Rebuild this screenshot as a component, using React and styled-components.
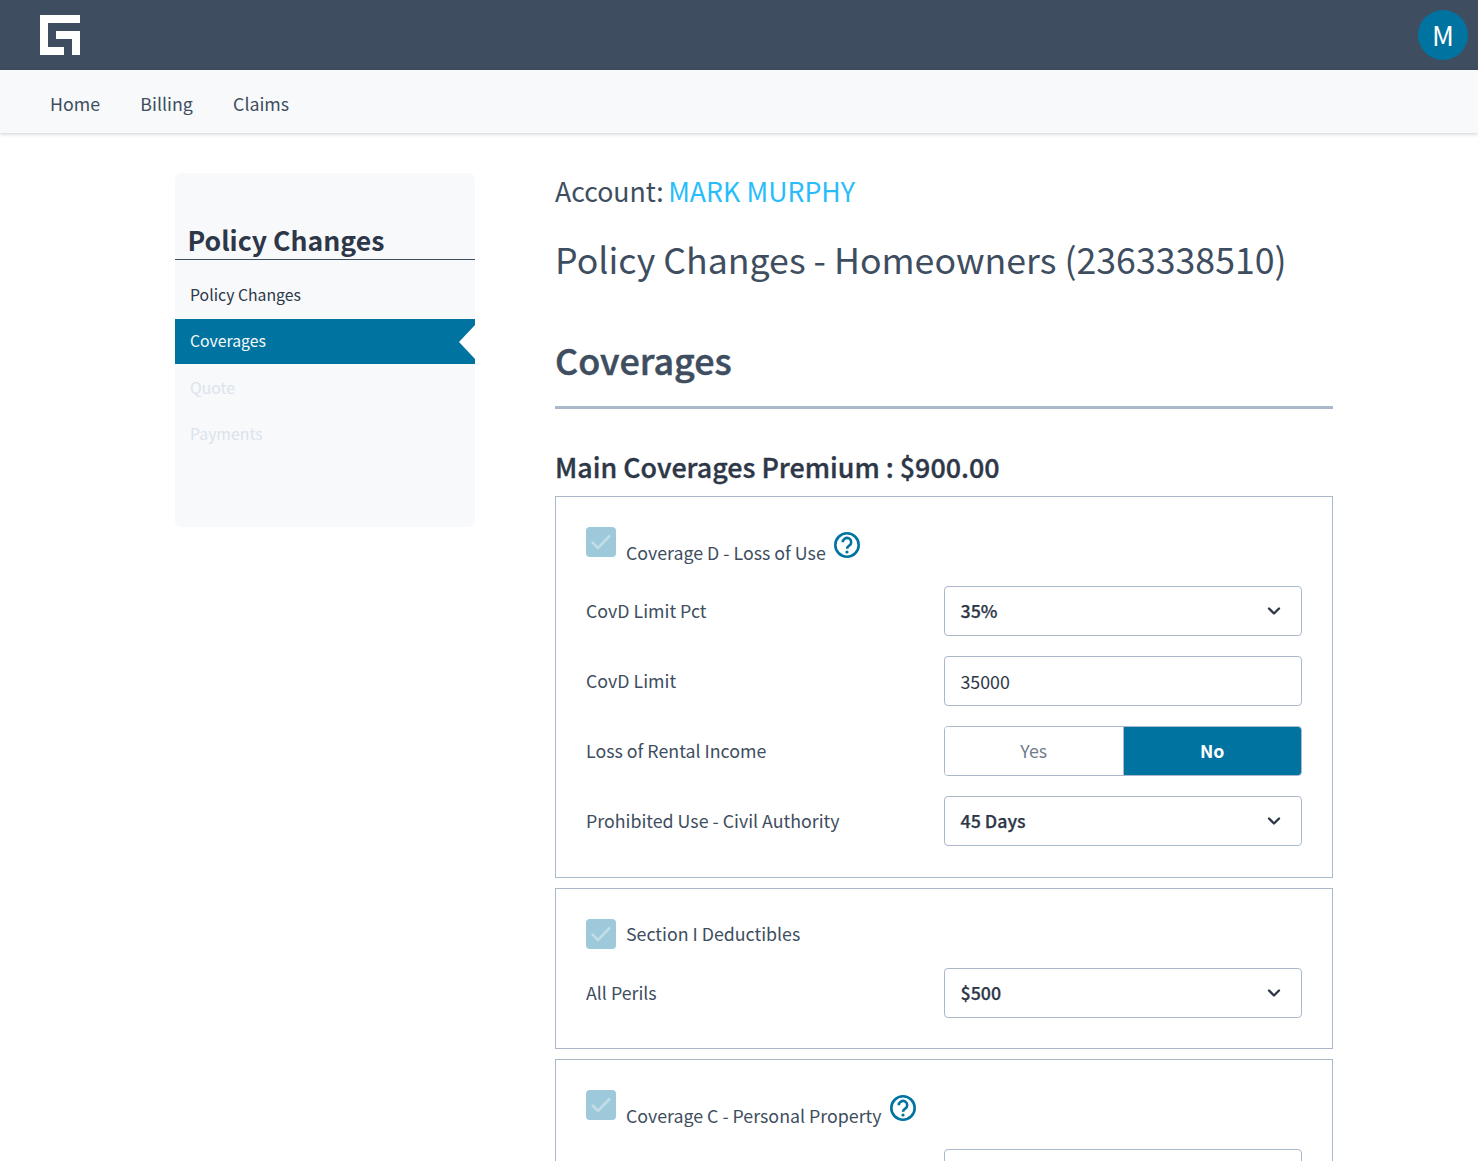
import React from "react";
import styled, { createGlobalStyle } from "styled-components";
import { ChevronDown } from "lucide-react";

const Global = createGlobalStyle`
  html, body { margin: 0; padding: 0; background: #fff; height: 100%; overflow: hidden; }
  body { font-family: "Noto Sans CJK JP", "Noto Sans CJK SC", sans-serif; color: #2d3748; }
  * { box-sizing: border-box; }
`;
const Page = styled.div`height: 1161px; overflow: hidden;`;
const TopBar = styled.header`
  height: 70px; background: #3e4e60; display: flex; align-items: center;
  justify-content: space-between; padding: 0 10px 0 40px;
`;
const Avatar = styled.div`
  width: 50px; height: 50px; border-radius: 50%; background: #0073a0; color: #fff;
  display: flex; align-items: center; justify-content: center; font-size: 27px; line-height: 1;
  padding-bottom: 1px;
`;
const Nav = styled.nav`
  height: 63px; background: #f7f9fb; display: flex; align-items: center; gap: 40.3px;
  padding: 3px 0 0 50px; box-shadow: 0 1px 4px rgba(0,0,0,.2); position: relative;
`;
const NavLink = styled.a`font-size: 17.8px; line-height: 24px; color: #3e4e60;`;
const Body = styled.div`display: flex; padding: 40px 0 0 175px; gap: 80px; align-items: flex-start;`;
const Side = styled.aside`
  width: 300px; height: 354px; flex: none; background: #f7f9fb; border-radius: 6px; padding-top: 52px;
`;
const SideTitle = styled.h2`
  margin: 0; padding: 0 12.5px; height: 35px; font-size: 26.6px; line-height: 30px; font-weight: 700;
  color: #2d3748; border-bottom: 1px solid #3e4e60;
`;
const SideList = styled.ul`list-style: none; margin: 12.5px 0 0; padding: 0;`;
const SideItem = styled.li`
  height: ${p => p.$active ? 45 : 46.5}px; display: flex; align-items: center; padding: 0 0 ${p => p.$disabled ? 1 : 2}px 15px;
  font-size: 15.8px; line-height: 24px; position: relative;
  margin-bottom: ${p => p.$active ? 1 : 0}px;
  background: ${p => p.$active ? "#0073a0" : "transparent"};
  color: ${p => p.$active ? "#f7f9fb" : p.$disabled ? "#dce3ec" : "#2d3748"};
  ${p => p.$active && `&::after {
    content: ""; position: absolute; right: 0; top: 50%; transform: translateY(-50%);
    border-top: 17px solid transparent; border-bottom: 17px solid transparent; border-right: 16px solid #fff;
  }`}
`;
const Main = styled.main`width: 778px; flex: none;`;
const Account = styled.div`
  font-size: 26.7px; line-height: 38px; color: #3e4e60; margin: -1px 0 24px; word-spacing: -1.5px;
  span { color: #28bdfa; word-spacing: 0.3px; }
`;
const Title = styled.h1`
  margin: 0; font-size: 35.7px; line-height: 50px; font-weight: 400; color: #3e4e60; white-space: nowrap;
`;
const SectionHead = styled.h2`
  margin: 50px 0 0; font-size: 35.9px; line-height: 50px; font-weight: 500; color: #3e4e60;
  -webkit-text-stroke: 0.5px #3e4e60;
  padding-bottom: 22px; border-bottom: 3px solid #a9b8cb;
`;
const Premium = styled.h3`
  margin: 40px 0 11px; font-size: 26.85px; line-height: 36px; font-weight: 500; color: #2d3748;
  -webkit-text-stroke: 0.35px #2d3748;
`;
const Card = styled.section`
  border: 1px solid #a9b8cb; padding: 30px 30px ${p => p.$compact ? 30 : 31}px; margin-bottom: 10px;
`;
const CardHead = styled.div`display: flex; align-items: flex-end; height: ${p => p.$help ? 39 : 30}px; margin-bottom: ${p => p.$help ? 20 : 19}px;`;
const Check = styled.span`
  width: 30px; height: 30px; border-radius: 4px; background: #9dc9da; display: flex; flex: none;
  align-items: center; justify-content: center; align-self: flex-start;
`;
const CardLabel = styled.span`
  font-size: 17.8px; line-height: 24px; color: #3e4e60; margin-left: 10px; white-space: nowrap;
  margin-bottom: ${p => p.$help ? 2 : 4}px;
`;
const Help = styled.svg`width: 28px; height: 28px; margin-left: 7px; align-self: flex-start; margin-top: 4px;`;
const Row = styled.div`
  display: flex; align-items: center; justify-content: space-between; height: 50px;
  & + & { margin-top: 20px; }
`;
const RowLabel = styled.label`font-size: 17.8px; line-height: 24px; color: #3e4e60; margin-bottom: 2px;`;
const Control = styled.div`
  width: 358px; height: 50px; border: 1px solid #a9b8cb; border-radius: 4px; background: #fff;
  display: flex; align-items: center; justify-content: space-between;
  padding: 0 17px ${p => p.$bold ? 2 : 0}px 15.5px; font-size: 17.8px; line-height: 24px; color: #2d3748;
  font-weight: ${p => p.$bold ? 500 : 400};
  ${p => p.$bold && "-webkit-text-stroke: 0.25px #2d3748;"}
`;
const Toggle = styled.div`
  width: 358px; height: 50px; border: 1px solid #a9b8cb; border-radius: 4px; overflow: hidden; display: flex;
`;
const ToggleOption = styled.div`
  flex: 1; display: flex; align-items: center; justify-content: center; font-size: 17.8px; line-height: 24px;
  padding-bottom: 2px;
  background: ${p => p.$on ? "#0073a0" : "#fff"};
  color: ${p => p.$on ? "#fff" : "#6e7c8c"};
  font-weight: ${p => p.$on ? 700 : 400};
  ${p => p.$on && "border-left: 1px solid #a9b8cb;"}
`;
const Arrow = styled(ChevronDown)`flex: none; position: relative; top: 1px; -webkit-text-stroke: 0;`;
const Logo = () => (
  <svg width="40" height="40" viewBox="40 15 40 40" fill="#fff" aria-label="logo">
    <path d="M40 15H80V23H48V47H64V55H40Z" />
    <path d="M56 31H80V55H72V39H56Z" />
  </svg>
);
const HelpIcon = () => (
  <Help viewBox="0 0 28 28" fill="none">
    <circle cx="14" cy="14" r="11.7" stroke="#0073a0" strokeWidth="2.6" />
    <path d="M9.8 11.2a4.2 4.2 0 1 1 6.4 3.5c-1.4.9-2.2 1.5-2.2 3" stroke="#0073a0" strokeWidth="2.6" />
    <circle cx="14" cy="21" r="1.6" fill="#0073a0" />
  </Help>
);
const Tick = () => (
  <svg width="20" height="16" viewBox="0 0 20 16" fill="none">
    <path d="M1 8l6 6L19 1.5" stroke="#c3dde7" strokeWidth="2.6" />
  </svg>
);
const Select = ({ children }) => (
  <Control $bold>
    {children}
    <Arrow size={20} strokeWidth={2.8} color="#2d3748" />
  </Control>
);

export default function App() {
  return (
    <Page>
      <Global />
      <TopBar>
        <Logo />
        <Avatar>M</Avatar>
      </TopBar>
      <Nav>
        <NavLink>Home</NavLink>
        <NavLink>Billing</NavLink>
        <NavLink>Claims</NavLink>
      </Nav>
      <Body>
        <Side>
          <SideTitle>Policy Changes</SideTitle>
          <SideList>
            <SideItem>Policy Changes</SideItem>
            <SideItem $active>Coverages</SideItem>
            <SideItem $disabled>Quote</SideItem>
            <SideItem $disabled>Payments</SideItem>
          </SideList>
        </Side>
        <Main>
          <Account>Account: <span>MARK MURPHY</span></Account>
          <Title>Policy Changes - Homeowners (2363338510)</Title>
          <SectionHead>Coverages</SectionHead>
          <Premium>Main Coverages Premium : $900.00</Premium>
          <Card>
            <CardHead $help>
              <Check><Tick /></Check>
              <CardLabel $help>Coverage D - Loss of Use</CardLabel>
              <HelpIcon />
            </CardHead>
            <Row><RowLabel>CovD Limit Pct</RowLabel><Select>35%</Select></Row>
            <Row><RowLabel>CovD Limit</RowLabel><Control>35000</Control></Row>
            <Row>
              <RowLabel>Loss of Rental Income</RowLabel>
              <Toggle><ToggleOption>Yes</ToggleOption><ToggleOption $on>No</ToggleOption></Toggle>
            </Row>
            <Row><RowLabel>Prohibited Use - Civil Authority</RowLabel><Select>45 Days</Select></Row>
          </Card>
          <Card $compact>
            <CardHead>
              <Check><Tick /></Check>
              <CardLabel>Section I Deductibles</CardLabel>
            </CardHead>
            <Row><RowLabel>All Perils</RowLabel><Select>$500</Select></Row>
          </Card>
          <Card>
            <CardHead $help>
              <Check><Tick /></Check>
              <CardLabel $help>Coverage C - Personal Property</CardLabel>
              <HelpIcon />
            </CardHead>
            <Row><RowLabel></RowLabel><Control /></Row>
          </Card>
        </Main>
      </Body>
    </Page>
  );
}
